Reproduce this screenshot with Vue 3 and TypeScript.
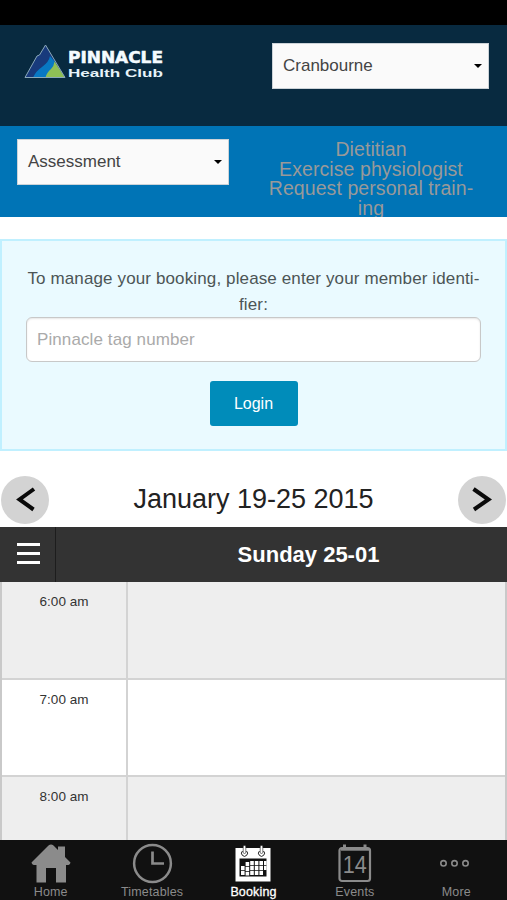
<script setup lang="ts">
import { ref } from 'vue'

const club = ref('Cranbourne')
const service = ref('Assessment')
const memberTag = ref('')
const services: string[] = ['Dietitian', 'Exercise physiologist', 'Request personal train-', 'ing']
const hours: string[] = ['6:00 am', '7:00 am', '8:00 am']
</script>

<template>
  <div class="screen">
    <div class="status-bar"></div>
    <header class="brand-bar">
      <svg class="logo" width="142" height="40" viewBox="0 0 142 40">
        <path d="M1 33.500 L13 12 L15.500 11 L21.500 1 L41 33.500Z" fill="#183a7c" />
        <path d="M9 33.500 Q12 27 18 23 Q25 18 26 12 L31 18 Q30 25 22 33.500Z" fill="#0878c3" />
        <path d="M21.500 33.500 Q23 28 27 25 Q30 22 30.500 17.500 L41 33.500Z" fill="#8fbf56" />
        <path d="M1 33.500 L13 12 L15.500 11 L21.500 1 L41 33.500Z" fill="none" stroke="#8ba9bb" stroke-width="1" />
        <text class="logo-name" x="44" y="19.300" textLength="95" lengthAdjust="spacingAndGlyphs">PINNACLE</text>
        <text class="logo-sub" x="44" y="32.500" textLength="95" lengthAdjust="spacingAndGlyphs">Health Club</text>
      </svg>
      <button class="select club">
        <span>{{ club }}</span>
        <i class="caret"></i>
      </button>
    </header>

    <nav class="service-bar">
      <button class="select service">
        <span>{{ service }}</span>
        <i class="caret"></i>
      </button>
      <div class="service-links">
        <div v-for="s in services" :key="s">{{ s }}</div>
      </div>
    </nav>

    <form class="login-panel" @submit.prevent>
      <p class="prompt">
        <span class="prompt-line">To manage your booking, please enter your member identi-</span>
        <span class="prompt-line">fier:</span>
      </p>
      <input v-model="memberTag" class="tag-input" type="text" placeholder="Pinnacle tag number" />
      <button class="login" type="submit">Login</button>
    </form>

    <div class="week">
      <button class="round">
        <svg width="48" height="48" viewBox="0 0 48 48"><path d="M33 13 L18.500 23.500 L32.500 33.500" /></svg>
      </button>
      <h1>January 19-25 2015</h1>
      <button class="round">
        <svg width="48" height="48" viewBox="0 0 48 48"><path d="M15.500 13 L30.500 23.500 L16 33.500" /></svg>
      </button>
    </div>

    <div class="day-bar">
      <button class="menu"><i></i><i></i><i></i></button>
      <h2>Sunday 25-01</h2>
    </div>

    <main class="schedule">
      <div v-for="h in hours" :key="h" class="row">
        <div class="time">{{ h }}</div>
        <div class="slot"></div>
      </div>
    </main>

    <footer class="tabs">
      <div class="tab">
        <svg width="42" height="42" viewBox="0 0 42 42">
          <path d="M1.500 19.500 L18.500 2.500 Q21 0.500 23.500 2.500 L28 7 V3.500 H35 V14 L40.500 19.500 Q40 22.500 36 22 V39.500 H26 V25 H16 V39.500 H6.500 V22 Q2 22.500 1.500 19.500Z" fill="#8b8b8b" />
        </svg>
        <span>Home</span>
      </div>
      <div class="tab">
        <svg width="42" height="42" viewBox="0 0 42 42" fill="none" stroke="#8b8b8b">
          <circle cx="21.500" cy="20.500" r="18.400" stroke-width="2.500" />
          <path d="M21.500 8.500 V20.500 H33" stroke-width="2.700" />
        </svg>
        <span>Timetables</span>
      </div>
      <div class="tab active">
        <svg width="42" height="42" viewBox="0 0 42 42">
          <path d="M3.500 5 H38.500 V38.500 H3.500Z" fill="#fff" />
          <path d="M7.500 15.500 H34.500 V33.500 H7.500Z" fill="#111" />
          <g fill="none" stroke="#fff">
            <path d="M10.800 23 V32.500 M15.400 19 V32.500 M20 18 V32.500 M24.600 18 V32.500 M29.200 18 V32.500" stroke-width="3.600" stroke-dasharray="4.200 .7" />
            <path d="M33.300 18 V27.500" stroke-width="2.600" stroke-dasharray="4.200 .7" />
          </g>
          <g fill="none" stroke="#222" stroke-width="1">
            <path d="M10.500 8 A3 3 0 1 0 14.500 8 M27.500 8 A3 3 0 1 0 31.500 8" />
          </g>
          <g fill="#fff" stroke="#222" stroke-width=".6">
            <rect x="11.200" y="2.500" width="2.600" height="8" rx="1.250" />
            <rect x="28.200" y="2.500" width="2.600" height="8" rx="1.250" />
          </g>
        </svg>
        <span>Booking</span>
      </div>
      <div class="tab">
        <svg width="42" height="42" viewBox="0 0 42 42">
          <g fill="none" stroke="#8b8b8b" stroke-width="2.200">
            <rect x="5.500" y="5" width="30.500" height="33" rx="2.500" />
            <path d="M7 6.800 H35" stroke-width="1.800" />
            <path d="M10.500 1.500 V7 M31 1.500 V7" stroke-width="3" />
          </g>
          <text class="date" x="20.700" y="29.500" text-anchor="middle" textLength="24" lengthAdjust="spacingAndGlyphs">14</text>
        </svg>
        <span>Events</span>
      </div>
      <div class="tab">
        <svg width="42" height="42" viewBox="0 0 42 42" fill="none" stroke="#8b8b8b" stroke-width="1.600">
          <circle cx="8.500" cy="20.300" r="2.700" />
          <circle cx="19.500" cy="20.300" r="2.700" />
          <circle cx="30.500" cy="20.300" r="2.700" />
        </svg>
        <span>More</span>
      </div>
    </footer>
  </div>
</template>

<style>
body {
  margin: 0;
  background: #fff;
}
</style>

<style scoped>
.screen {
  width: 507px;
  height: 900px;
  display: flex;
  flex-direction: column;
  overflow: hidden;
  background: #fff;
  font-family: 'Liberation Sans', Arial, sans-serif;
  color: #222;
}
.screen * {
  box-sizing: border-box;
}
button {
  font-family: inherit;
  border: 0;
  padding: 0;
  margin: 0;
}
.status-bar {
  height: 25px;
  flex: none;
  background: #000;
}
.brand-bar {
  height: 101px;
  flex: none;
  display: flex;
  justify-content: space-between;
  align-items: flex-start;
  padding: 18px 18px 0 24px;
  background: #082a40;
}
.logo {
  margin-top: 1px;
}
.logo-name {
  font: bold 15px 'DejaVu Sans', sans-serif;
  fill: #f4fbff;
  stroke: #f4fbff;
  stroke-width: 0.5px;
}
.logo-sub {
  font: bold 11.500px 'Liberation Sans', sans-serif;
  fill: #e6f3fa;
}
.select {
  display: flex;
  align-items: center;
  justify-content: space-between;
  height: 46px;
  padding: 0 6px 0 10px;
  border: 1px solid #ccd3d8;
  background: #fafafa;
  color: #444;
  font-size: 17px;
}
.club {
  width: 217px;
}
.service {
  width: 212px;
}
.caret {
  border: 4px solid transparent;
  border-top: 4px solid #000;
  border-bottom: 0;
}
.service-bar {
  height: 91px;
  flex: none;
  display: flex;
  align-items: flex-start;
  padding: 13px 18px 0 17px;
  overflow: hidden;
  background: #0074b6;
}
.service-links {
  flex: 1;
  padding-left: 24px;
  margin-top: 1px;
  font-size: 19.500px;
  line-height: 19.500px;
  letter-spacing: 0.08px;
  text-align: center;
  color: #999;
  white-space: nowrap;
}
.login-panel {
  height: 212px;
  flex: none;
  margin-top: 22px;
  padding: 25px 24px 0;
  display: flex;
  flex-direction: column;
  align-items: center;
  border: 2px solid #c0f0ff;
  background: #eafaff;
}
.prompt {
  margin: 0;
  text-align: center;
  font-size: 17px;
  line-height: 25.500px;
  letter-spacing: 0.125px;
  color: #4c5556;
  white-space: nowrap;
}
.prompt-line {
  display: block;
}
.tag-input {
  width: 455px;
  height: 45px;
  flex: none;
  margin: 0;
  padding: 0 10px;
  border: 1px solid #c8c8c8;
  border-radius: 6px;
  box-shadow: inset 0 1px 2px rgba(0, 0, 0, 0.1);
  background: #fff;
  font: 17px 'Liberation Sans', Arial, sans-serif;
  letter-spacing: 0.1px;
}
.tag-input::placeholder {
  color: #aaa;
  opacity: 1;
}
.login {
  width: 88px;
  height: 45px;
  margin-top: 19px;
  border-radius: 3px;
  background: #008cba;
  color: #fff;
  font-size: 16px;
}
.week {
  height: 76px;
  flex: none;
  display: flex;
  justify-content: space-between;
  align-items: flex-end;
  padding: 0 1px 3px;
}
.round {
  width: 48px;
  height: 48px;
  border-radius: 50%;
  background: #d3d3d3;
}
.round svg {
  display: block;
}
.round path {
  fill: none;
  stroke: #0a0a0a;
  stroke-width: 4;
}
h1 {
  margin: 0;
  font-size: 27px;
  line-height: 48px;
  font-weight: 400;
  position: relative;
  top: -1px;
}
.day-bar {
  height: 55px;
  flex: none;
  display: flex;
  background: #333;
  color: #fff;
}
.menu {
  width: 56px;
  flex: none;
  padding: 0 0 3px 1px;
  display: flex;
  flex-direction: column;
  align-items: center;
  justify-content: center;
  gap: 6px;
  border-right: 1px solid #1d1d1d;
  background: transparent;
}
.menu i {
  width: 23px;
  height: 3px;
  background: #fff;
}
h2 {
  flex: 1;
  margin: 0;
  padding-left: 54px;
  text-align: center;
  font-size: 22px;
  line-height: 55px;
  font-weight: 700;
}
.schedule {
  flex: 1;
  min-height: 0;
  overflow: hidden;
  border-left: 2px solid #c9c9c9;
  border-right: 2px solid #c9c9c9;
}
.row {
  height: 97.700px;
  display: flex;
  border-bottom: 2px solid #d3d3d3;
  background: #fff;
}
.row:nth-child(odd) {
  background: #eee;
}
.time {
  width: 126px;
  padding-top: 12px;
  border-right: 2px solid #d3d3d3;
  text-align: center;
  font-size: 13.500px;
  line-height: 16px;
  color: #333;
}
.slot {
  flex: 1;
}
.tabs {
  height: 60px;
  flex: none;
  display: grid;
  grid-template-columns: repeat(5, 1fr);
  padding-top: 3px;
  background: #111;
}
.tab {
  display: flex;
  flex-direction: column;
  align-items: center;
  color: #8b8b8b;
  font-size: 12.500px;
  line-height: 14px;
  letter-spacing: 0.15px;
}
.tab svg {
  flex: none;
  display: block;
}
.active {
  color: #fff;
}
.active span {
  -webkit-text-stroke: 0.3px #fff;
}
.date {
  font: 23px 'Liberation Sans', Arial, sans-serif;
  fill: #8b8b8b;
  letter-spacing: 0;
}
</style>
